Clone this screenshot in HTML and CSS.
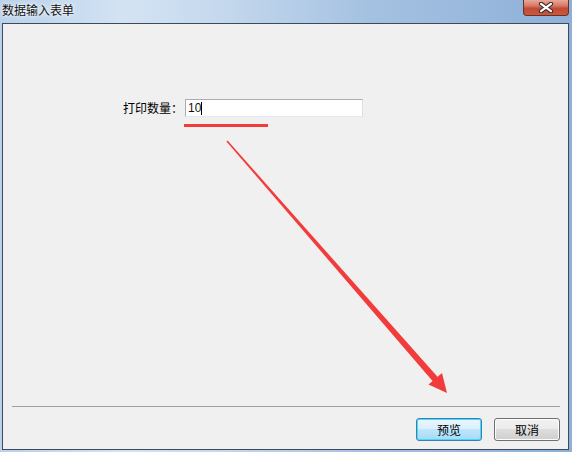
FILE: index.html
```html
<!DOCTYPE html>
<html lang="zh-CN">
<head>
    <meta charset="UTF-8">
    <meta name="viewport" content="width=device-width, initial-scale=1.0">
    <title>数据输入表单</title>
    <link rel="stylesheet" href="styles.css">
</head>
<body>

    <div class="window">
        <div class="titlebar">
            <span class="title">数据输入表单</span>
            <div class="close-btn">
                <svg width="16" height="11" viewBox="0 0 16 11">
                    <path d="M3 1.8 L13 9.2 M13 1.8 L3 9.2" stroke="#3a2a2a" stroke-width="4.2" stroke-linecap="round"/>
                    <path d="M3 1.8 L13 9.2 M13 1.8 L3 9.2" stroke="#ffffff" stroke-width="2.2" stroke-linecap="round"/>
                </svg>
            </div>
        </div>

        <div class="client">
            <div class="form-row">
                <label class="label">打印数量：</label>
                <div class="textbox">10<span class="caret"></span></div>
            </div>
            <div class="mark"></div>

            <div class="spacer"></div>

            <div class="separator"></div>
            <div class="buttons">
                <button class="btn default">预览</button>
                <button class="btn">取消</button>
            </div>
        </div>
    </div>

    <!-- annotation arrow drawn over the dialog -->
    <svg class="arrow" width="572" height="452" viewBox="0 0 572 452">
        <polygon points="227.6,140.6 226.4,141.4 433.6,382.2 438.4,377.8" fill="#f23b3b"/>
        <polygon points="447,393 428.5,384.5 442,373" fill="#f23b3b"/>
    </svg>

</body>
</html>
```

FILE: styles.css
```css
body {
    margin: 0;
    font-family: "Liberation Sans", "Noto Sans CJK SC", sans-serif;
    font-size: 12px;
    color: #000000;
}
.window {
    position: relative;
    width: 572px;
    height: 452px;
    box-sizing: border-box;
    padding: 0 3px 2px 2px;
    display: flex;
    flex-direction: column;
    background: linear-gradient(to right, #b9d1ea 0%, #d3e3f3 22%, #c3d7ed 40%, #a4c1e1 65%, #8eb0d8 100%);
}
.titlebar {
    height: 23px;
    display: flex;
    align-items: flex-start;
}
.title {
    margin-top: 3px;
    line-height: 14px;
    font-size: 12px;
    font-family: "Noto Sans CJK SC", sans-serif;
    color: #111111;
    text-shadow: 0 0 6px #ffffff, 0 0 3px #ffffff;
}
.close-btn {
    margin-left: auto;
    width: 44px;
    height: 15px;
    border: 1px solid #6b2f25;
    border-top: none;
    border-radius: 0 0 4px 4px;
    background: linear-gradient(to bottom, #e9a796 0%, #d47766 40%, #c24a33 55%, #c9583c 100%);
    display: flex;
    align-items: center;
    justify-content: center;
}
.client {
    flex: 1;
    display: flex;
    flex-direction: column;
    background-color: #f0f0f0;
    border: 1px solid #3e4a5a;
}
.form-row {
    display: flex;
    align-items: center;
    margin-top: 75px;
    padding-left: 120px;
}
.label {
    font-family: "Noto Sans CJK SC", sans-serif;
    line-height: 14px;
    margin-right: 2px;
}
.textbox {
    width: 174px;
    height: 16px;
    box-sizing: content-box;
    border: 1px solid #abadb3;
    border-right-color: #dbdfe6;
    border-bottom-color: #e3e9ef;
    background-color: #ffffff;
    padding-left: 2px;
    line-height: 16px;
    color: #111111;
    display: flex;
    align-items: center;
}
.caret {
    display: inline-block;
    width: 1px;
    height: 13px;
    background-color: #000000;
}
.mark {
    width: 84px;
    height: 3px;
    margin: 7px 0 0 181px;
    background-color: #f23b3b;
}
.spacer {
    flex: 1;
}
.separator {
    height: 1px;
    margin: 0 8px 0 9px;
    background-color: #a0a0a0;
}
.buttons {
    display: flex;
    justify-content: flex-end;
    gap: 12px;
    margin-top: 11px;
    padding: 0 8px 8px 0;
}
.btn {
    width: 66px;
    height: 23px;
    padding: 0;
    font-family: "Noto Sans CJK SC", sans-serif;
    font-size: 12px;
    color: #000000;
    border: 1px solid #707070;
    border-radius: 3px;
    background: linear-gradient(to bottom, #f2f2f2 0%, #ebebeb 49%, #dddddd 50%, #cfcfcf 100%);
    box-shadow: inset 0 0 0 1px #fcfcfc;
}
.btn.default {
    border-color: #3c7fb1;
    background: linear-gradient(to bottom, #eaf6fd 0%, #d9f0fc 49%, #bee6fd 50%, #a7d9f5 100%);
    box-shadow: inset 0 0 0 1px #48d8fb;
}
.arrow {
    position: absolute;
    left: 0;
    top: 0;
    pointer-events: none;
}
```
